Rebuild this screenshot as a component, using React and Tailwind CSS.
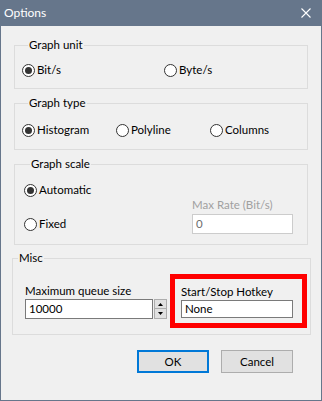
import React from "react";

const font = { fontFamily: 'Lato, "Noto Sans", "Liberation Sans", sans-serif' };

function Radio({ label, checked, className = "" }) {
  return (
    <div className={`flex items-center gap-[2px] h-[16px] ${className}`}>
      <span className="w-[13px] h-[13px] rounded-full border border-[#333333] bg-white flex items-center justify-center shrink-0">
        {checked && <span className="w-[7px] h-[7px] rounded-full bg-[#333333]" />}
      </span>
      <span className="leading-[16px]">{label}</span>
    </div>
  );
}

function Group({ title, className = "", legendClass = "ml-[6px]", children }) {
  return (
    <fieldset className={`border border-[#dcdcdc] ${className}`}>
      <legend className={`px-px leading-[14px] ${legendClass}`}>{title}</legend>
      {children}
    </fieldset>
  );
}

export default function App() {
  return (
    <div
      className="w-[322px] h-[401px] bg-[#66768b] flex flex-col text-[11.5px] text-black"
      style={font}
    >
      {/* Title bar */}
      <div className="h-[26px] flex items-center justify-between pl-[4px] pr-[11px] text-white text-[12px] shrink-0">
        <span className="leading-[16px]">Options</span>
        <svg width="10" height="10" viewBox="0 0 10 10">
          <path d="M0.5 0.5 L9.5 9.5 M9.5 0.5 L0.5 9.5" stroke="#ffffff" strokeWidth="1.1" />
        </svg>
      </div>

      {/* Body */}
      <div className="flex-1 mx-px mb-px bg-[#f0f0f0] flex flex-col">
        <Group title="Graph unit" className="ml-[13px] mt-[12px] w-[294px] pl-[7px] pt-[10px] pb-[10px]">
          <div className="flex">
            <Radio label="Bit/s" checked className="w-[142px]" />
            <Radio label="Byte/s" />
          </div>
        </Group>

        <Group title="Graph type" className="ml-[13px] mt-[7px] w-[294px] pl-[7px] pt-[12px] pb-[11px]">
          <div className="flex">
            <Radio label="Histogram" checked className="w-[94px]" />
            <Radio label="Polyline" className="w-[94px]" />
            <Radio label="Columns" />
          </div>
        </Group>

        <Group title="Graph scale" className="ml-[13px] mt-[7px] w-[294px] pl-[9px] pt-[11px] pb-[10px]">
          <Radio label="Automatic" checked />
          <div className="flex items-end">
            <div className="w-[168px] h-[20px] flex items-center">
              <Radio label="Fixed" />
            </div>
            <div className="flex flex-col">
              <span className="leading-[14px] h-[14px] text-[#a0a0a0] mb-[2px]">Max Rate (Bit/s)</span>
              <div className="w-[101px] h-[20px] border border-[#cccccc] bg-white px-[3px] leading-[18px] text-[#6d6d6d]">
                0
              </div>
            </div>
          </div>
        </Group>

        <Group
          title="Misc"
          legendClass="ml-[5px]"
          className="ml-[11px] mt-[6px] w-[299px] pt-[9px] pb-[6px]"
        >
          <div className="flex items-start">
            <div className="ml-[12px] mt-[10px] flex flex-col">
              <span className="leading-[14px] h-[14px]">Maximum queue size</span>
              <div className="flex mt-[1px]">
                <div className="w-[128px] h-[20px] border border-[#7a7a7a] bg-white px-[3px] leading-[18px]">
                  10000
                </div>
                <div className="ml-[1px] w-[13px] h-[20px] flex flex-col">
                  <div className="h-[10px] border border-[#adadad] bg-[#e1e1e1] flex items-center justify-center">
                    <svg width="5" height="3" viewBox="0 0 5 3">
                      <path d="M0 3 L2.5 0 L5 3 Z" fill="#000" />
                    </svg>
                  </div>
                  <div className="h-[10px] border border-[#adadad] border-t-0 bg-[#e1e1e1] flex items-center justify-center">
                    <svg width="5" height="3" viewBox="0 0 5 3">
                      <path d="M0 0 L2.5 3 L5 0 Z" fill="#000" />
                    </svg>
                  </div>
                </div>
              </div>
            </div>
            <div className="ml-[3px] w-[137px] h-[54px] border-[5px] border-[#ff0000] pl-[6px] pt-[6px] flex flex-col">
              <span className="leading-[14px] h-[14px]">Start/Stop Hotkey</span>
              <div className="mt-[1px] w-[112px] h-[18px] border border-[#7a7a7a] bg-white px-[3px] leading-[16px]">
                None
              </div>
            </div>
          </div>
        </Group>

        <div className="flex justify-end gap-[12px] mt-[15px] mr-[28px]">
          <button className="w-[72px] h-[23px] border-2 border-[#0078d7] bg-[#e1e1e1] leading-[19px]">
            OK
          </button>
          <button className="w-[72px] h-[23px] border border-[#adadad] bg-[#e1e1e1] leading-[21px]">
            Cancel
          </button>
        </div>
      </div>
    </div>
  );
}
